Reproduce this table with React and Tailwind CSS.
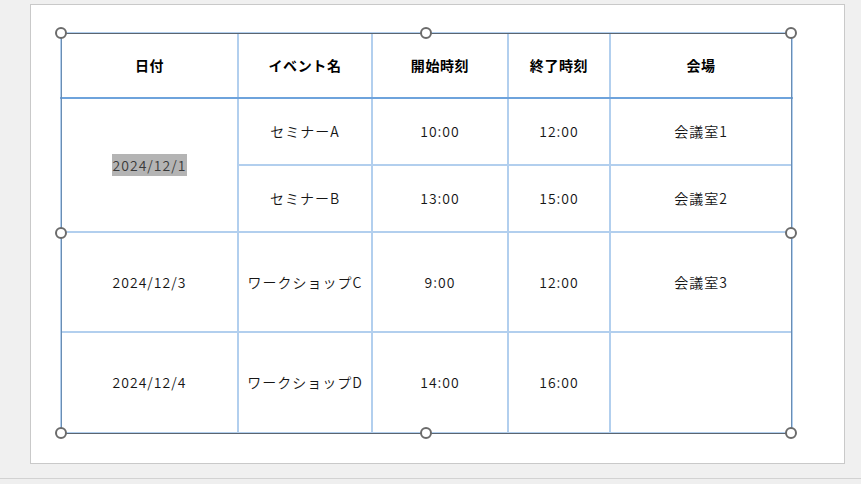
const rows = [
  { date: "2024/12/3", event: "ワークショップC", start: "9:00", end: "12:00", place: "会議室3", h: "h-[100px]" },
  { date: "2024/12/4", event: "ワークショップD", start: "14:00", end: "16:00", place: "", h: "h-[101px]" },
];

const cell = "border-2 border-[#b2cfee] text-center align-middle p-0";

const Handle = ({ x, y }) => (
  <div
    className="absolute w-[12px] h-[12px] rounded-full border-2 border-[#6b6b6b] bg-white"
    style={{ left: x - 6, top: y - 6 }}
  />
);

export default function App() {
  const handles = [
    [61, 33], [426, 33], [791, 33],
    [61, 233], [791, 233],
    [61, 433], [426, 433], [791, 433],
  ];

  return (
    <div
      className="relative w-[861px] h-[484px] bg-[#f0f0f0] overflow-hidden text-[14px] text-[#161616] tracking-[1px] font-[350]"
      style={{ fontFamily: '"Noto Sans CJK JP", "Noto Sans", sans-serif' }}
    >
      <div className="h-[478px] pt-[4px] pl-[30px]">
        <div className="w-[815px] h-[460px] bg-white border border-[#c9c9c9] pl-[29px] pt-[27px]">
          <table className="border-collapse table-fixed w-[731px]">
            <colgroup>
              <col className="w-[177px]" />
              <col className="w-[134px]" />
              <col className="w-[136px]" />
              <col className="w-[102px]" />
              <col className="w-[182px]" />
            </colgroup>
            <thead>
              <tr className="h-[65px] font-bold text-black tracking-[0.6px]">
                <th className={`${cell} border-b-[#6ea3dc]`}>日付</th>
                <th className={`${cell} border-b-[#6ea3dc]`}>イベント名</th>
                <th className={`${cell} border-b-[#6ea3dc]`}>開始時刻</th>
                <th className={`${cell} border-b-[#6ea3dc]`}>終了時刻</th>
                <th className={`${cell} border-b-[#6ea3dc]`}>会場</th>
              </tr>
            </thead>
            <tbody>
              <tr className="h-[67px]">
                <td className={cell} rowSpan={2}>
                  <span className="bg-[#b4b4b4] text-[#3a3a3a] px-[1px] py-[1px]">2024/12/1</span>
                </td>
                <td className={cell}>セミナーA</td>
                <td className={cell}>10:00</td>
                <td className={cell}>12:00</td>
                <td className={cell}>会議室1</td>
              </tr>
              <tr className="h-[67px]">
                <td className={cell}>セミナーB</td>
                <td className={cell}>13:00</td>
                <td className={cell}>15:00</td>
                <td className={cell}>会議室2</td>
              </tr>
              {rows.map((r) => (
                <tr key={r.date} className={r.h}>
                  <td className={cell}>{r.date}</td>
                  <td className={cell}>{r.event}</td>
                  <td className={cell}>{r.start}</td>
                  <td className={cell}>{r.end}</td>
                  <td className={cell}>{r.place}</td>
                </tr>
              ))}
            </tbody>
          </table>
        </div>
      </div>
      <div className="h-[6px] border-t border-[#d2d2d2] bg-[#efefef]" />

      {/* selection frame */}
      <div className="absolute left-[61px] top-[33px] w-[731px] h-[401px] border-y border-y-[#5b6570] border-x border-x-[#6a8db3]" />
      {handles.map(([x, y]) => (
        <Handle key={`${x}-${y}`} x={x} y={y} />
      ))}
    </div>
  );
}
